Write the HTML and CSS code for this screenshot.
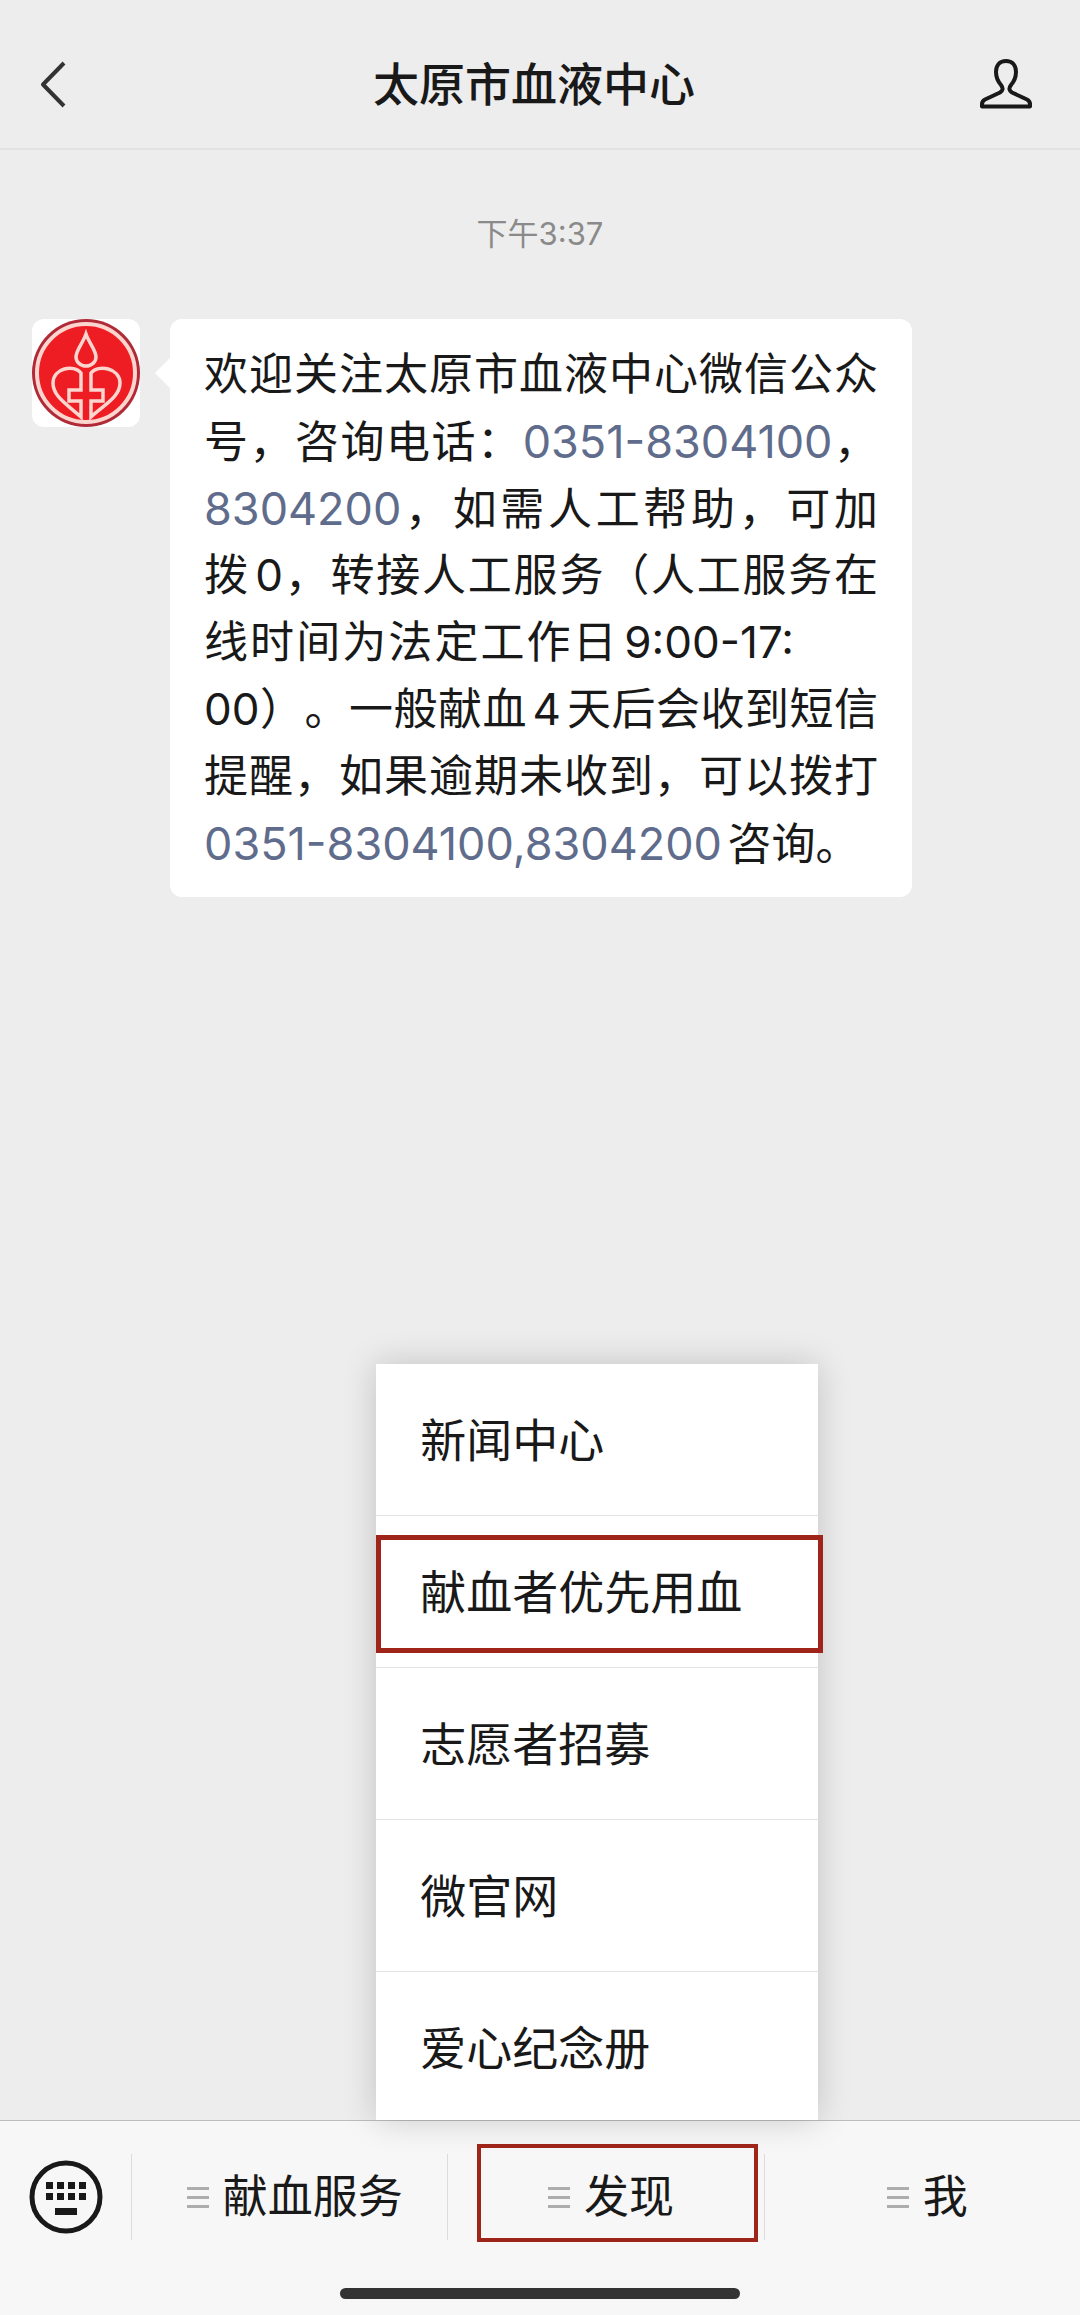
FILE: index.html
```html
<!DOCTYPE html>
<html lang="zh-CN">
<head>
<meta charset="utf-8">
<meta name="viewport" content="width=device-width, initial-scale=1">
<title>太原市血液中心</title>
<link rel="stylesheet" href="styles.css">
</head>
<body>
<div class="app">
  <header class="header">
    <button class="icon-button" type="button" aria-label="返回">
      <svg class="icon-back" viewBox="0 0 32 48" aria-hidden="true"><path d="M28 3 7 24.500 28 46"/></svg>
    </button>
    <h1 class="title">太原市血液中心</h1>
    <button class="icon-button icon-button-end" type="button" aria-label="公众号资料">
      <svg class="icon-person" viewBox="0 0 52 50" aria-hidden="true"><path d="M26 2C19.500 2 16 6.500 16 13c0 6 2 9.500 5 13 2.500 3.500 2 5.500-1 7.500L5 40.500c-3 1.500-3.500 3.500-3 7h48c.5-3.500 0-5.500-3-7L32 33.500c-3-2-3.500-4-1-7.500 3-3.500 5-7 5-13C36 6.500 32.500 2 26 2Z"/></svg>
    </button>
  </header>

  <main class="chat">
    <time class="time">下午3:37</time>
    <article class="message">
      <svg class="avatar" viewBox="0 0 108 108" role="img" aria-label="太原市血液中心">
        <rect width="108" height="108" fill="#fff"/>
        <circle cx="54" cy="54" r="54" fill="#b02a38"/>
        <circle cx="54" cy="54" r="49" fill="#ee1c23" stroke="#fcd5cf" stroke-width="4"/>
        <g fill="none" stroke="#fcd5cf" stroke-width="3.500">
          <path d="M54 15c-3 9-10 16-10 23a10 9 0 0 0 20 0c0-7-7-14-10-23Z"/>
          <path d="M49 98V82H37V71h12V54c-7-9-28-5-28 10 0 14 15 22 28 34Z"/>
          <path d="M59 98V82h12V71H59V54c7-9 29-5 29 10 0 14-16 22-29 34Z"/>
        </g>
      </svg>
      <div class="bubble">
        <span class="line">欢迎关注太原市血液中心微信公众</span>
        <span class="line">号，咨询电话：<a href="tel:0351-8304100">0351-8304100</a>，</span>
        <span class="line"><a href="tel:8304200">8304200</a>，如需人工帮助，可加</span>
        <span class="line">拨0，转接人工服务（人工服务在</span>
        <span class="line line-short">线时间为法定工作日9:00-17:</span>
        <span class="line">00）。一般献血4天后会收到短信</span>
        <span class="line">提醒，如果逾期未收到，可以拨打</span>
        <span class="line line-last"><a href="tel:0351-8304100">0351-8304100,8304200</a>咨询。</span>
      </div>
    </article>
  </main>

  <footer class="footer">
    <nav class="tabs" aria-label="公众号菜单">
      <button class="keyboard" type="button" aria-label="切换到键盘">
        <svg class="icon-keyboard" viewBox="0 0 74 74" aria-hidden="true">
          <circle cx="37" cy="37" r="34" fill="none" stroke="#191919" stroke-width="5"/>
          <path fill="#191919" d="M17 22h7v7h-7zM28 22h7v7h-7zM39 22h7v7h-7zM50 22h7v7h-7zM17 33h7v7h-7zM28 33h7v7h-7zM39 33h7v7h-7zM50 33h7v7h-7zM26 48h22v7H26z"/>
        </svg>
      </button>
      <div class="tab">
        <button class="tab-button" type="button"><span class="bars"></span>献血服务</button>
      </div>
      <div class="tab tab-open">
        <button class="tab-button" type="button" aria-expanded="true"><span class="bars"></span>发现</button>
        <ul class="menu">
          <li class="menu-item"><a href="#news">新闻中心</a></li>
          <li class="menu-item menu-item-marked"><a href="#priority">献血者优先用血</a></li>
          <li class="menu-item"><a href="#volunteer">志愿者招募</a></li>
          <li class="menu-item"><a href="#site">微官网</a></li>
          <li class="menu-item"><a href="#album">爱心纪念册</a></li>
        </ul>
      </div>
      <div class="tab">
        <button class="tab-button" type="button"><span class="bars"></span>我</button>
      </div>
    </nav>
    <div class="home-indicator"></div>
  </footer>
</div>
</body>
</html>
```
FILE: styles.css
```css
* {
  box-sizing: border-box;
}

body {
  margin: 0;
  background: #ededed;
  color: #191919;
  font-family: Inter, "Noto Sans CJK SC", sans-serif;
}

button {
  padding: 0;
  border: 0;
  background: none;
  color: inherit;
  font: inherit;
}

a {
  color: inherit;
  text-decoration: none;
}

.app {
  display: flex;
  flex-direction: column;
  min-height: 100vh;
  overflow: hidden;
}

/* Header */
.header {
  display: grid;
  grid-template-columns: 1fr auto 1fr;
  align-items: center;
  height: 150px;
  padding: 19px 48px 0 36px;
  border-bottom: 2px solid #e2e2e2;
}

.icon-button {
  display: flex;
  justify-self: start;
}

.icon-button-end {
  justify-self: end;
}

.icon-back,
.icon-person {
  display: block;
  fill: none;
  stroke: #191919;
  stroke-linejoin: round;
}

.icon-back {
  width: 32px;
  height: 48px;
  stroke: #333;
  stroke-width: 4;
}

.icon-person {
  width: 52px;
  height: 50px;
  stroke-width: 4;
}

.title {
  margin: 0;
  font-size: 46px;
  font-weight: 500;
  line-height: 64px;
}

/* Conversation */
.chat {
  flex: 1;
  padding: 59px 32px;
}

.time {
  display: block;
  margin-bottom: 60px;
  color: #8a8a8a;
  font-size: 31px;
  line-height: 50px;
  text-align: center;
}

.message {
  display: flex;
  align-items: flex-start;
  gap: 30px;
}

.avatar {
  flex: none;
  width: 108px;
  height: 108px;
  border-radius: 12px;
}

.bubble {
  position: relative;
  width: 742px;
  padding: 22px 34px 20px;
  border-radius: 12px;
  background: #fff;
  font-size: 44px;
  line-height: 67px;
  text-spacing-trim: space-all;
  text-autospace: normal;
}

.bubble::before {
  content: "";
  position: absolute;
  top: 39px;
  right: 100%;
  border: 15px solid transparent;
  border-right-color: #fff;
  border-left-width: 0;
}

.bubble a {
  color: #5f6c8c;
  font-size: 45px;
}

.line {
  display: block;
  height: 67px;
  text-align-last: justify;
  white-space: nowrap;
}

.line-short {
  margin-right: 84px;
}

.line-last {
  text-align-last: left;
}

/* Bottom bar */
.footer {
  border-top: 1px solid #bdbdbd;
  background: #f7f7f7;
}

.tabs {
  display: grid;
  grid-template-columns: 131px 1fr 1fr 1fr;
  height: 152px;
}

.keyboard {
  display: grid;
  place-items: center;
}

.icon-keyboard {
  display: block;
  width: 74px;
  height: 74px;
}

.tab {
  position: relative;
  display: flex;
  align-items: center;
}

.tab-button {
  display: flex;
  flex: 1;
  align-items: center;
  justify-content: center;
  gap: 14px;
  height: 86px;
  padding-left: 10px;
  border-left: 1px solid #dcdcdc;
  font-size: 45px;
  line-height: 64px;
}

.bars {
  width: 22px;
  height: 21px;
  background: repeating-linear-gradient(#adadad 0 3px, transparent 3px 9px);
}

.tab-open::after,
.menu-item-marked::after {
  content: "";
  position: absolute;
  border: 5px solid #9f2419;
  pointer-events: none;
}

.tab-open::after {
  inset: 23px 6px 31px 30px;
  border-width: 4px;
}

.menu {
  position: absolute;
  bottom: calc(100% + 1px);
  left: -71px;
  width: 442px;
  margin: 0;
  padding: 0;
  background: #fff;
  box-shadow: 0 0 32px rgba(0, 0, 0, 0.18);
  list-style: none;
}

.menu-item {
  position: relative;
  height: 152px;
  border-bottom: 1px solid #e3e3e3;
  font-size: 46px;
}

.menu-item:last-child {
  height: 148px;
  border-bottom: 0;
}

.menu-item a {
  display: block;
  padding-left: 44px;
  line-height: 152px;
}

.menu-item-marked::after {
  inset: 19px -5px 14px 0;
}

.home-indicator {
  width: 400px;
  height: 11px;
  margin: 15px auto 16px;
  border-radius: 6px;
  background: #333;
}
```
